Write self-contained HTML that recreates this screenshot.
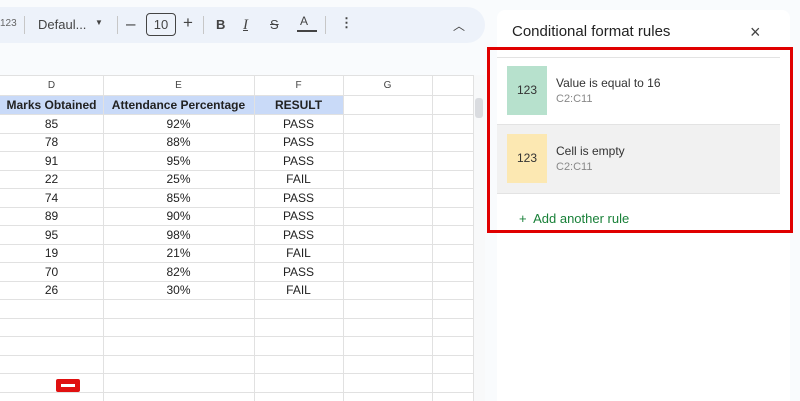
<!DOCTYPE html>
<html><head><style>
html,body{margin:0;width:800px;height:401px;overflow:hidden}
body{background:#f9fbfd;font-family:"Liberation Sans",Arial,sans-serif;position:relative}
.a{position:absolute}
.tb{left:0;top:7px;width:485px;height:36px;background:#edf2fa;border-radius:0 18px 18px 0;color:#444;font-size:13px}
.grid{left:0;top:75px;width:473px;height:326px;background:#fff}
.c{position:absolute;text-align:center;font-size:12px;color:#222;line-height:18px}
.vl{position:absolute;top:75px;width:1px;height:326px;background:#e1e1e1}
.hl{position:absolute;left:0;width:473px;height:1px;background:#e1e1e1}
</style></head><body>
<div class="a tb">
<span class="a" style="left:0;top:11px;font-size:10px;color:#666">123</span>
<div class="a" style="left:24px;top:9px;width:1px;height:18px;background:#c7c7c7"></div>
<span class="a" style="left:38px;top:10px">Defaul...</span>
<span class="a" style="left:95px;top:11px;font-size:8px">▼</span>
<div class="a" style="left:117px;top:9px;width:1px;height:18px;background:#c7c7c7"></div>
<span class="a" style="left:126px;top:7px;font-size:17px">–</span>
<div class="a" style="left:146px;top:6px;width:28px;height:21px;border:1px solid #444;border-radius:4px;text-align:center;line-height:21px">10</div>
<span class="a" style="left:183px;top:6px;font-size:17px">+</span>
<div class="a" style="left:203px;top:9px;width:1px;height:18px;background:#c7c7c7"></div>
<b class="a" style="left:216px;top:10px">B</b>
<i class="a" style="left:243px;top:10px;font-family:'Liberation Serif';font-size:15px;text-decoration:underline;text-decoration-thickness:1px">I</i>
<span class="a" style="left:270px;top:10px;text-decoration:line-through">S</span>
<span class="a" style="left:300px;top:7px;font-size:12px">A</span>
<div class="a" style="left:297px;top:23px;width:20px;height:2px;background:#444"></div>
<div class="a" style="left:325px;top:9px;width:1px;height:18px;background:#c7c7c7"></div>
<span class="a" style="left:340px;top:8px;font-weight:bold">⋮</span>
<span class="a" style="left:453px;top:10px;font-size:12px">︿</span>
</div>
<div class="a grid"></div>
<div class="a" style="left:473px;top:75px;width:12px;height:326px;background:#f8f9fa"></div>
<div class="a" style="left:475px;top:98px;width:8px;height:20px;background:#dadce0;border-radius:3px"></div>
<div class="a" style="left:0;top:75px;width:473px;height:20px;background:#fff"></div>
<div class="a" style="left:0;top:95px;width:343px;height:19px;background:#c9daf8"></div>
<div class="vl" style="left:103px"></div><div class="vl" style="left:254px"></div><div class="vl" style="left:343px"></div><div class="vl" style="left:432px"></div><div class="vl" style="left:473px"></div>
<div class="hl" style="top:75px"></div><div class="hl" style="top:95px"></div><div class="hl" style="top:114px"></div>
<div class="c" style="left:0;top:77px;width:103px;font-size:10px;color:#444">D</div>
<div class="c" style="left:103px;top:77px;width:151px;font-size:10px;color:#444">E</div>
<div class="c" style="left:254px;top:77px;width:89px;font-size:10px;color:#444">F</div>
<div class="c" style="left:343px;top:77px;width:89px;font-size:10px;color:#444">G</div>
<div class="c" style="left:0;top:96px;width:103px;font-weight:bold">Marks Obtained</div>
<div class="c" style="left:103px;top:96px;width:151px;font-weight:bold">Attendance Percentage</div>
<div class="c" style="left:254px;top:96px;width:89px;font-weight:bold">RESULT</div>
<div id="rows"></div>
<script>
var d=[[85,92,"PASS"],[78,88,"PASS"],[91,95,"PASS"],[22,25,"FAIL"],[74,85,"PASS"],[89,90,"PASS"],[95,98,"PASS"],[19,21,"FAIL"],[70,82,"PASS"],[26,30,"FAIL"]];
var h="";for(var i=0;i<16;i++){var t=114+i*18.5;if(i<10){h+='<div class="c" style="left:0;top:'+(t+0.5)+'px;width:103px">'+d[i][0]+'</div><div class="c" style="left:103px;top:'+(t+0.5)+'px;width:151px">'+d[i][1]+'%</div><div class="c" style="left:254px;top:'+(t+0.5)+'px;width:89px">'+d[i][2]+'</div>';}h+='<div class="hl" style="top:'+(t+18.5)+'px"></div>';}
document.getElementById("rows").innerHTML=h;
</script>
<div class="a" style="left:56px;top:379px;width:24px;height:13px;background:#e01010;border-radius:2px"><div class="a" style="left:5px;top:5px;width:14px;height:3px;background:#fff"></div></div>
<div class="a" style="left:497px;top:10px;width:293px;height:391px;background:#fff;border-radius:8px 8px 0 0"></div>
<div class="a" style="left:512px;top:23px;font-size:15px;color:#222">Conditional format rules</div>
<div class="a" style="left:750px;top:22px;font-size:18px;color:#444">×</div>
<div class="a" style="left:497px;top:57px;width:283px;height:1px;background:#e3e3e3"></div>
<div class="a" style="left:497px;top:124px;width:283px;height:68px;background:#f1f1f1;border-top:1px solid #e3e3e3;border-bottom:1px solid #e3e3e3"></div>
<div class="a" style="left:507px;top:66px;width:40px;height:49px;background:#b7e1cd;text-align:center;line-height:49px;font-size:12px;color:#333">123</div>
<div class="a" style="left:507px;top:134px;width:40px;height:49px;background:#fce8b2;text-align:center;line-height:49px;font-size:12px;color:#333">123</div>
<div class="a" style="left:556px;top:76px;font-size:12px;color:#333">Value is equal to 16</div>
<div class="a" style="left:556px;top:93px;font-size:11px;color:#888">C2:C11</div>
<div class="a" style="left:556px;top:144px;font-size:12px;color:#333">Cell is empty</div>
<div class="a" style="left:556px;top:161px;font-size:11px;color:#888">C2:C11</div>
<div class="a" style="left:519px;top:211px;font-size:13px;color:#188038">+&nbsp; Add another rule</div>
<div class="a" style="left:487px;top:47px;width:300px;height:180px;border:3px solid #e00000"></div>
</body></html>
